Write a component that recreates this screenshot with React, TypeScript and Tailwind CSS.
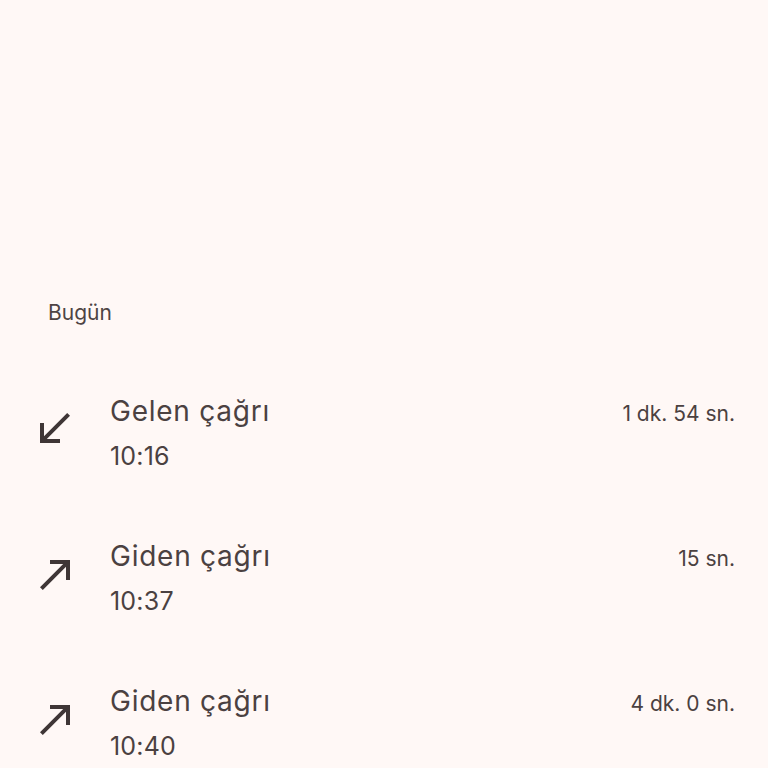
import React from "react";

const Incoming = () => (
  <svg width="48" height="48" viewBox="0 0 24 24" fill="#3f3636">
    <path d="M20 5.41L18.59 4 7 15.59V9H5v10h10v-2H8.41z" />
  </svg>
);
const Outgoing = () => (
  <svg width="48" height="48" viewBox="0 0 24 24" fill="#3f3636">
    <path d="M9 5v2h6.59L4 18.59 5.41 20 17 8.41V15h2V5z" />
  </svg>
);

const rows = [
  { t: "Gelen çağrı", time: "10:16", d: "1 dk. 54 sn.", inc: true },
  { t: "Giden çağrı", time: "10:37", d: "15 sn.", inc: false },
  { t: "Giden çağrı", time: "10:40", d: "4 dk. 0 sn.", inc: false },
];

export default function App() {
  return (
    <div
      className="min-h-screen w-full bg-[#fff8f6] text-[#4b4141] overflow-hidden"
      style={{ fontFamily: "Inter, Roboto, 'Noto Sans', sans-serif" }}
    >
      <div className="h-[297px]" />
      <div className="pl-[48px] text-[21px] leading-[32px] text-[#4e4444]">Bugün</div>
      <div className="mt-[60px] flex flex-col gap-[55px]">
        {rows.map((r, i) => (
          <div key={i} className="flex pl-[30px] pr-[33px]">
            <div className="w-[80px] shrink-0">
              <div className={"mt-[16px] w-[48px] h-[48px] " + (r.inc ? "ml-0" : "ml-[2px]")}>
                {r.inc ? <Incoming /> : <Outgoing />}
              </div>
            </div>
            <div className="flex-1 flex flex-col">
              <div className="text-[28px] leading-[45px] tracking-[0.75px] text-[#4b4141]">{r.t}</div>
              <div className="text-[25px] leading-[45px] tracking-[0.2px] text-[#4b4141]">{r.time}</div>
            </div>
            <div className="pt-[2px] text-[21px] leading-[45px] text-[#4b4141]">{r.d}</div>
          </div>
        ))}
      </div>
    </div>
  );
}
